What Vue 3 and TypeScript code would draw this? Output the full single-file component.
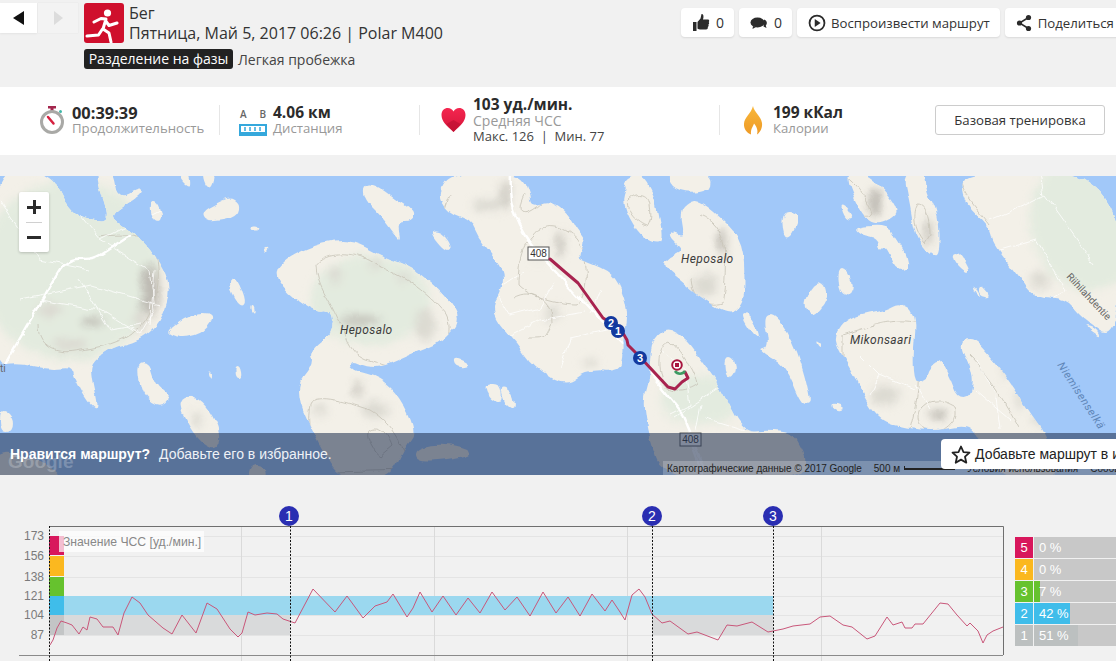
<template>
  <div class="page">
    <header class="top">
      <div class="nav">
        <button class="nav-btn prev"><span class="tri-left"></span></button>
        <button class="nav-btn next"><span class="tri-right"></span></button>
      </div>
      <div class="title-block">
        <div class="title-row">
          <svg class="sport-icon" viewBox="0 0 40 40">
            <rect width="40" height="40" rx="3" fill="#cf0f2c" />
            <circle cx="23.5" cy="10" r="3.6" fill="#fff" />
            <path d="M10 19l7-3.500 5 .5-3 10 6 4 2 9M21 17l4 5.500 8-2.500M18.500 26l-4 6-11.500 1" fill="none" stroke="#fff" stroke-width="3" stroke-linecap="round" stroke-linejoin="round" />
          </svg>
          <div class="title-text">
            <div>Бег</div>
            <div>Пятница, Май 5, 2017 06:26 | Polar M400</div>
          </div>
        </div>
        <div class="tag-row">
          <span class="tag">Разделение на фазы</span>
          <span class="tag-note">Легкая пробежка</span>
        </div>
      </div>
      <div class="actions">
        <button class="act count">
          <svg width="18" height="18" viewBox="0 0 18 18"><path d="M1 8h3.500v9H1zM5.500 8l3-3.500L9.500 0c2 0 2.500 2 1.500 5.500h5c1.500 0 1.500 2 .7 2.500.8 1 .5 2-.3 2.500.5 1 .2 2-.6 2.500.3 1.500-.3 2.500-1.800 2.500H8c-1.500 0-2.500-.8-2.500-1z" fill="#2b2b2b" /></svg>
          <span>0</span>
        </button>
        <button class="act count">
          <svg width="18" height="14" viewBox="0 0 18 14"><ellipse cx="7.500" cy="6.500" rx="7" ry="5" fill="#2b2b2b" /><path d="M14 3.500c3 1 3.800 4 1.800 6l.7 2.500-3-1.500z" fill="#2b2b2b" /><path d="M3 10l-.5 3 3.500-2z" fill="#2b2b2b" /></svg>
          <span>0</span>
        </button>
        <button class="act play">
          <svg width="18" height="18" viewBox="0 0 20 20"><circle cx="10" cy="10" r="8.300" fill="none" stroke="#2b2b2b" stroke-width="2" /><path d="M7.500 5.500l6.500 4.500-6.500 4.500z" fill="#2b2b2b" /></svg>
          <span>Воспроизвести маршрут</span>
        </button>
        <button class="act">
          <svg width="16" height="18" viewBox="0 0 16 18"><path d="M12.500 3.500L3.500 9l9 5.500" fill="none" stroke="#2b2b2b" stroke-width="1.500" /><circle cx="12.500" cy="3.500" r="2.600" fill="#2b2b2b" /><circle cx="3.500" cy="9" r="2.600" fill="#2b2b2b" /><circle cx="12.500" cy="14.500" r="2.600" fill="#2b2b2b" /></svg>
          <span>Поделиться</span>
        </button>
      </div>
    </header>

    <section class="stats">
      <div class="stat stat-time">
        <svg class="stat-icon" width="26" height="30" viewBox="0 0 26 30">
          <rect x="9" y="1" width="8" height="2.500" fill="#a3264d" />
          <rect x="11.500" y="3" width="3" height="3" fill="#a3264d" />
          <circle cx="21.500" cy="6.500" r="1.500" fill="#3fb8a8" />
          <circle cx="13" cy="17" r="10.500" fill="#fff" stroke="#a9a9a6" stroke-width="3" />
          <path d="M9 12l5.500 6.500" stroke="#d6213f" stroke-width="2.500" stroke-linecap="round" />
        </svg>
        <div>
          <div class="stat-value time">00:39:39</div>
          <div class="stat-label">Продолжительность</div>
        </div>
      </div>
      <div class="stat stat-dist">
        <div class="ruler">
          <div class="ruler-ab"><span>A</span><span>B</span></div>
          <svg width="28" height="12" viewBox="0 0 28 12">
            <rect x="1" y="1" width="26" height="10" fill="#fff" stroke="#35a8dc" stroke-width="2" />
            <path d="M6 3v4M11 3v4M16 3v4M21 3v4" stroke="#35a8dc" stroke-width="1.500" />
            <rect x="1" y="8" width="26" height="3" fill="#35a8dc" />
          </svg>
        </div>
        <div>
          <div class="stat-value">4.06 км</div>
          <div class="stat-label">Дистанция</div>
        </div>
      </div>
      <div class="stat stat-hr">
        <svg class="stat-icon" width="25" height="26" viewBox="0 0 25 26">
          <defs>
            <linearGradient id="heart" x1="0" y1="0" x2="0" y2="1">
              <stop offset="0" stop-color="#f4264f" />
              <stop offset="1" stop-color="#d5153a" />
            </linearGradient>
          </defs>
          <path d="M12.500 25C6 19 .5 14.500.5 8 .5 3.500 3.500 1 6.800 1c2.500 0 4.500 1.300 5.700 3.500C13.700 2.300 15.700 1 18.200 1c3.300 0 6.300 2.500 6.300 7 0 6.500-5.500 11-12 17z" fill="url(#heart)" />
          <path d="M12.500 25L5.500 17l7-4 7 4z" fill="#b80f31" opacity="0.6" />
        </svg>
        <div>
          <div class="stat-value">103 уд./мин.</div>
          <div class="stat-label wide">Средняя ЧСС</div>
          <div class="stat-extra">Макс. 126&nbsp; | &nbsp;Мин. 77</div>
        </div>
      </div>
      <div class="stat stat-cal">
        <svg class="stat-icon" width="20" height="29" viewBox="0 0 20 29">
          <defs>
            <linearGradient id="flame" x1="0" y1="0" x2="0" y2="1">
              <stop offset="0" stop-color="#f8b73a" />
              <stop offset="1" stop-color="#ee9a26" />
            </linearGradient>
          </defs>
          <path d="M10 0c1 6 8 10 9 17 .6 5-2 9.500-5 11.500 1-3 .5-7-3-11-1 3.500-3.500 5-3 11C4 27 .5 23 1 17.500 1.500 11 8 8 10 0z" fill="url(#flame)" />
        </svg>
        <div>
          <div class="stat-value">199 кКал</div>
          <div class="stat-label">Калории</div>
        </div>
      </div>
      <button class="base-btn">Базовая тренировка</button>
    </section>

    <section class="map">
      <svg class="map-art" viewBox="0 176 1116 299">
        <defs>
          <filter id="soft" x="-50%" y="-50%" width="200%" height="200%"><feGaussianBlur stdDeviation="4" /></filter>
          <filter id="rough" filterUnits="userSpaceOnUse" x="-20" y="160" width="1160" height="330">
            <feTurbulence type="fractalNoise" baseFrequency="0.06" numOctaves="3" seed="4" result="noise" />
            <feDisplacementMap in="SourceGraphic" in2="noise" scale="7" xChannelSelector="R" yChannelSelector="G" />
            <feGaussianBlur stdDeviation="0.4" />
          </filter>
          <clipPath id="lands"><path v-for="(d, i) in landPaths" :key="i" :d="d" /></clipPath>
        </defs>
        <rect x="0" y="176" width="1116" height="299" fill="#a1c8f9" />
        <g filter="url(#rough)">
          <path v-for="(d, i) in landPaths" :key="i" :d="d" fill="#f3f0e8" />
          <g clip-path="url(#lands)">
            <g filter="url(#soft)">
              <ellipse v-for="(z, i) in greens" :key="'g' + i" :cx="z[0]" :cy="z[1]" :rx="z[2]" :ry="z[3]" fill="#e3ebdf" />
              <ellipse v-for="(h, i) in hills" :key="'h' + i" :cx="h[0]" :cy="h[1]" :rx="h[2]" :ry="h[3]" :fill="h[4] ? '#bdbab2' : '#dcdad2'" />
            </g>
            <path v-for="(d, i) in contours" :key="'c' + i" :d="d" fill="none" stroke="#c6c3b6" stroke-width="0.8" />
            <path v-for="(d, i) in minorRoads" :key="'r' + i" :d="d" fill="none" stroke="#fff" stroke-width="0.9" opacity="0.85" />
            <path v-for="(d, i) in mainRoads" :key="'m' + i" :d="d" fill="none" stroke="#fff" stroke-width="2.400" />
          </g>
        </g>

        <text class="place" x="340" y="334">Heposalo</text>
        <text class="place" x="681" y="263">Heposalo</text>
        <text class="place" x="850" y="344">Mikonsaari</text>
        <text class="road-name" transform="translate(1066 277) rotate(47)">Riihilahdentie</text>
        <text class="water-name" transform="translate(1057 365) rotate(57)">Niemisenselkä</text>
        <text class="road-name" x="0" y="372">ti</text>

        <g v-for="s in shields" :key="s[0]">
          <rect :x="s[0]" :y="s[1]" width="21" height="13" fill="#fff" stroke="#555" />
          <text class="shield" :x="s[0] + 10.500" :y="s[1] + 10">408</text>
        </g>

        <path d="M550 259L565 272 578 283 603 318 620 328 627 340 628 345 640 357 668 387 675 389 682 382 688 378 685 372" fill="none" stroke="#a8234f" stroke-width="3" stroke-linejoin="round" stroke-linecap="round" />
        <path d="M675 371a6 6 0 0 0 10 0" fill="none" stroke="#3e9a63" stroke-width="2.500" />
        <circle cx="677" cy="365" r="4.800" fill="#fff" stroke="#a8163f" stroke-width="2" />
        <rect x="675" y="363" width="4" height="4" fill="#a8163f" />
        <g v-for="m in routeMarks" :key="m.n">
          <circle :cx="m.x" :cy="m.y" r="7" fill="#13399f" />
          <text class="route-num" :x="m.x" :y="m.y + 4">{{ m.n }}</text>
        </g>
      </svg>

      <div class="zoom-ctl">
        <button class="zoom-btn"><span class="plus"></span></button>
        <button class="zoom-btn"><span class="minus"></span></button>
      </div>

      <div class="fav-bar">
        <span class="fav-strong">Нравится маршрут?</span>
        <span class="fav-soft">Добавьте его в избранное.</span>
      </div>
      <span class="g-logo">Google</span>
      <div class="attrib">
        <span>Картографические данные © 2017 Google</span>
        <span class="scale">500 м <i></i></span>
        <span>Условия использования</span>
        <span>Сообщить об ошибке</span>
      </div>
      <button class="fav-btn">
        <svg width="20" height="19" viewBox="0 0 20 19"><path d="M10 1.500l2.500 5.600 6 .6-4.500 4 1.300 6L10 14.600l-5.300 3.100 1.300-6-4.500-4 6-.6z" fill="none" stroke="#222" stroke-width="1.800" stroke-linejoin="round" /></svg>
        <span>Добавьте маршрут в избранное</span>
      </button>
    </section>

    <section class="chart-wrap">
      <svg class="chart" width="1010" height="186" viewBox="0 475 1010 186">
        <line v-for="y in gridY" :key="'y' + y" x1="49" x2="1003" :y1="y + 0.5" :y2="y + 0.5" stroke="#e4e4e4" />
        <line v-for="x in gridX" :key="'x' + x" :x1="x + 0.5" :x2="x + 0.5" y1="526" y2="661" stroke="#dadada" />

        <rect x="49" y="596" width="724" height="19" fill="#9bd8ef" />
        <rect x="49" y="615" width="241" height="20" fill="#d9dadb" />
        <rect x="652" y="615" width="121" height="20" fill="#d9dadb" />

        <rect v-for="z in zoneBlocks" :key="z.y" x="49" :y="z.y" width="15" :height="z.h" :fill="z.c" />

        <rect x="59" y="531" width="145" height="21" fill="#fff" opacity="0.72" />
        <text class="chart-title" x="63" y="546">Значение ЧСС [уд./мин.]</text>

        <text v-for="t in yTicks" :key="t.v" class="tick" x="44" :y="t.y">{{ t.v }}</text>

        <polyline :points="hrLine" fill="none" stroke="#c9577a" stroke-width="1" />

        <path d="M49 526.500H1003.500V655" fill="none" stroke="#6f6f6f" />
        <line x1="19" x2="1003" y1="655.500" y2="655.500" stroke="#8a8a8a" />
        <line v-for="x in [49, 290, 652, 773]" :key="'d' + x" :x1="x + 0.5" :x2="x + 0.5" y1="526" y2="661" stroke="#111" stroke-dasharray="2 1.500" />

        <g v-for="m in lapMarks" :key="m.n">
          <circle :cx="m.x" cy="516" r="10" fill="#2a2eb2" />
          <text class="lap-num" :x="m.x" y="521">{{ m.n }}</text>
        </g>
      </svg>

      <div class="zones">
        <div v-for="z in zones" :key="z.n" class="zone">
          <div class="zone-n" :style="{ background: z.color }">{{ z.n }}</div>
          <div class="zone-bar">
            <div class="zone-fill" :style="{ width: z.pct * 0.86 + 'px', background: z.fill }"></div>
            <span>{{ z.pct }} %</span>
          </div>
        </div>
      </div>
    </section>
  </div>
</template>

<script setup lang="ts">
type Pt = [number, number]

// closed outline through the midpoints, so coasts don't look like polygons
function blob(pts: Pt[]): string {
  const mid = (a: Pt, b: Pt): Pt => [(a[0] + b[0]) / 2, (a[1] + b[1]) / 2]
  const start = mid(pts[pts.length - 1], pts[0])
  let d = `M${start[0]} ${start[1]}`
  pts.forEach((p, i) => {
    const m = mid(p, pts[(i + 1) % pts.length])
    d += `Q${p[0]} ${p[1]} ${m[0]} ${m[1]}`
  })
  return d + 'Z'
}

const lands: Pt[][] = [
  [[-10, 170], [50, 170], [70, 213], [100, 222], [110, 217], [93, 170], [113, 170], [117, 200], [140, 187], [142, 195], [113, 212], [113, 220], [140, 237], [160, 263], [171, 287], [163, 317], [150, 333], [133, 343], [113, 347], [93, 360], [90, 373], [99, 412], [87, 403], [73, 377], [72, 367], [50, 370], [20, 363], [-10, 367]],
  [[150, 202], [157, 200], [163, 215], [160, 223], [152, 220]],
  [[201, 212], [215, 204], [230, 197], [240, 203], [238, 215], [225, 220], [205, 222]],
  [[177, 172], [188, 172], [190, 187], [183, 183]],
  [[203, 172], [216, 172], [212, 189], [206, 185]],
  [[250, 227], [256, 226], [258, 231], [251, 232]],
  [[263, 249], [268, 247], [266, 252]],
  [[363, 186], [375, 185], [395, 200], [414, 212], [410, 222], [397, 222], [401, 241], [395, 235], [388, 225], [380, 215], [365, 200]],
  [[430, 231], [440, 230], [451, 243], [450, 251], [443, 248]],
  [[230, 277], [237, 277], [247, 303], [240, 307], [230, 290]],
  [[250, 305], [253, 305], [254, 313], [251, 312]],
  [[167, 330], [190, 314], [216, 314], [205, 332], [185, 338], [170, 335]],
  [[137, 363], [150, 363], [155, 385], [172, 398], [160, 407], [145, 397], [140, 385]],
  [[177, 402], [193, 394], [210, 410], [221, 435], [216, 450], [203, 445], [190, 430]],
  [[208, 373], [212, 372], [212, 382]],
  [[235, 366], [240, 366], [242, 378], [236, 378]],
  [[0, 407], [13, 415], [13, 432], [0, 432]],
  [[-5, 448], [45, 462], [66, 480], [-5, 480]],
  [[250, 465], [262, 463], [268, 480], [248, 480]],
  [[273, 270], [300, 250], [347, 237], [383, 257], [413, 267], [447, 297], [461, 320], [440, 343], [413, 353], [383, 367], [367, 367], [350, 360], [350, 370], [380, 377], [400, 397], [417, 433], [405, 447], [390, 480], [340, 480], [320, 445], [293, 390], [315, 363], [310, 350], [333, 333], [333, 310], [317, 313], [287, 293]],
  [[415, 448], [445, 443], [478, 453], [445, 460], [415, 461]],
  [[453, 357], [473, 367], [455, 369]],
  [[483, 385], [500, 383], [503, 403], [490, 401]],
  [[438, 193], [452, 172], [520, 172], [530, 193], [532, 207], [550, 200], [567, 213], [577, 230], [587, 242], [577, 258], [587, 262], [613, 273], [625, 297], [628, 320], [623, 335], [624, 355], [620, 373], [587, 370], [567, 387], [533, 367], [517, 343], [497, 322], [491, 305], [503, 290], [503, 270], [490, 253], [477, 237], [470, 220], [447, 212]],
  [[500, 385], [512, 392], [515, 410], [505, 405]],
  [[650, 343], [667, 327], [687, 340], [703, 363], [720, 387], [743, 433], [767, 430], [793, 433], [800, 445], [807, 460], [800, 480], [665, 480], [650, 440], [643, 400], [650, 380]],
  [[623, 180], [640, 172], [653, 193], [658, 213], [662, 242], [652, 243], [637, 232], [622, 203], [628, 187]],
  [[668, 172], [710, 172], [711, 190], [690, 194], [672, 188]],
  [[690, 202], [700, 200], [727, 223], [743, 243], [745, 283], [743, 303], [730, 315], [700, 297], [680, 280], [662, 265], [672, 255], [684, 250], [670, 238], [672, 232], [685, 238], [680, 212]],
  [[740, 313], [750, 313], [762, 337], [755, 337]],
  [[763, 315], [777, 315], [798, 350], [811, 400], [808, 406], [800, 403], [785, 365], [757, 350], [770, 348]],
  [[782, 212], [798, 212], [798, 225], [790, 239], [783, 235]],
  [[803, 305], [815, 282], [825, 285], [827, 300], [812, 318]],
  [[837, 267], [845, 267], [854, 287], [845, 298], [838, 290]],
  [[840, 204], [846, 205], [854, 218], [846, 219]],
  [[843, 172], [868, 172], [901, 210], [892, 220], [875, 225], [862, 215]],
  [[855, 227], [890, 225], [895, 238], [906, 253], [908, 270], [895, 270], [885, 245], [880, 252], [878, 238], [860, 235]],
  [[903, 172], [925, 172], [925, 190], [938, 215], [939, 256], [930, 255], [915, 235], [910, 205]],
  [[953, 253], [960, 253], [971, 272], [965, 272], [955, 262]],
  [[972, 288], [976, 290], [981, 299], [976, 296]],
  [[980, 285], [985, 290], [992, 299], [978, 297]],
  [[960, 170], [963, 203], [990, 227], [993, 243], [1020, 277], [1033, 297], [1067, 298], [1080, 317], [1120, 345], [1120, 170]],
  [[1083, 325], [1095, 328], [1100, 338]],
  [[835, 333], [850, 317], [887, 310], [900, 302], [917, 313], [913, 357], [915, 383], [927, 380], [927, 370], [940, 358], [950, 377], [957, 397], [970, 397], [973, 373], [958, 343], [973, 338], [987, 353], [1007, 377], [1033, 417], [1045, 433], [1062, 480], [1000, 480], [977, 433], [965, 425], [930, 432], [883, 423], [867, 403], [853, 373], [837, 347]],
  [[815, 340], [822, 345], [819, 348]],
  [[832, 403], [842, 405], [841, 411], [833, 409]],
  [[725, 357], [733, 357], [737, 370], [731, 380], [726, 375]]
]
const landPaths = lands.map(blob)

// cx, cy, rx, ry, dark?
const hills: [number, number, number, number, number][] = [
  [150, 290, 9, 26, 1], [93, 322, 12, 4, 1], [140, 322, 7, 12, 0], [50, 310, 12, 8, 0], [70, 345, 18, 6, 0],
  [335, 275, 6, 9, 0], [375, 265, 6, 6, 0], [403, 278, 5, 6, 0], [360, 320, 22, 4, 1], [425, 325, 10, 16, 0],
  [358, 390, 3, 8, 1], [320, 410, 8, 5, 0], [375, 410, 14, 8, 0], [197, 420, 5, 8, 0],
  [490, 205, 18, 6, 0], [505, 195, 3, 14, 1], [560, 245, 3, 14, 1], [537, 255, 2, 8, 0],
  [552, 313, 8, 7, 0], [590, 362, 8, 4, 0], [722, 242, 4, 12, 1], [705, 285, 12, 12, 0],
  [875, 203, 6, 14, 1], [928, 232, 3, 14, 1], [1040, 280, 10, 8, 0], [1040, 420, 8, 5, 0],
  [938, 415, 8, 5, 1], [885, 395, 14, 10, 0], [1020, 400, 4, 10, 0], [1005, 370, 3, 10, 0]
]
const greens: [number, number, number, number][] = [
  [70, 270, 90, 90], [1090, 220, 60, 70], [370, 300, 60, 45], [700, 400, 40, 25]
]

const contours: string[] = [
  'M100 237c30-5 50 0 55 15 8 25 0 55-10 70-12 15-35 25-65 28-20 5-42 0-42-25',
  'M316 265c10-15 40-15 60 0 25 10 50 25 70 50 8 15 0 40-20 55-15 5-40-5-60-10-20-8-20-30-28-40-8-20-22-35-22-55z',
  'M310 405c5-12 30-5 60 5 25 15 35 40 40 60l-80 2c-15-20-25-45-20-67z',
  'M368 432c8-10 20 0 25 15l-12 10c-8-5-15-20-13-25z',
  'M525 195c-10 20 0 25 20 5l-2-22M450 195c-10 25-5 20 10 25',
  'M533 235c10-15 40-10 50 15 5 20 5 40-5 55-15 0-45-5-60-20 0-25 5-40 15-50z',
  'M513 298c20-12 40 5 40 25-8 15-5 15-25 15',
  'M670 340c15 15 25 30 27 45-10 8-30 10-35-5-5-15-5-35 8-40z',
  'M628 200c8-8 20-8 22 5 2 12 0 18-3 22-12-5-22-18-19-27z',
  'M700 215c12 5 20 15 24 30 3 25 0 50-2 58-15 5-30-5-30-25',
  'M846 177c8 5 20 20 25 35-2 8-15 5-20-10z M918 205c8 0 12 15 12 30l-5 8c-12-15-12-30-7-38z',
  'M843 335c30-10 60-20 80-10 5 20-5 40-5 60 0 15-8 45-10 50-30 0-45-40-65-65z',
  'M920 410c15-15 25-8 35-3 5 10-8 25-25 27-10-5-15-15-10-24z',
  'M968 355c15 15 30 35 50 70M960 178c0 15 25 40 30 48'
]
const minorRoads: string[] = [
  'M0 200l40 60 50 10M60 190l40 50 50 30 5 40-15 25-40-25-60-10M100 240l60-30M155 270l-5 55M20 300l70-15 70 20M80 280l30 50 30-5',
  'M525 270l-30 20 15 25 30-8 15-25M500 340l40-20 45-8M560 368l10-30 45-10M600 290l-10 25',
  'M660 350l25 20 5 35-20 10M720 387l-45 30M700 405l-5 25M745 430l-40-12',
  'M860 355l20 20 35 15M880 375l-10 20M915 385l15 25M975 360l20 30 5 40M1010 420l-35-30',
  'M990 220l35-15 20-10 50 70M1000 250l35-10 30 50-35 20M1043 195l-5-25'
]
const mainRoads: string[] = [
  'M0 372C20 340 35 310 60 270 75 250 85 265 100 255L130 235',
  'M510 175c-2 30 5 50 30 80M540 255l65 70 35 35 40 50 25 60',
  'M690 440l15 40'
]

const shields: [number, number][] = [[528, 247], [680, 433]]
const routeMarks = [
  { n: 2, x: 611, y: 323 },
  { n: 1, x: 618, y: 331 },
  { n: 3, x: 640, y: 358 }
]

const gridY = [536, 556, 577, 596, 615, 635]
const gridX = [241, 434, 627, 821]
const yTicks = [
  { v: 173, y: 540 }, { v: 156, y: 560 }, { v: 138, y: 581 },
  { v: 121, y: 600 }, { v: 104, y: 619 }, { v: 87, y: 639 }
]
const zoneBlocks = [
  { y: 536, h: 19, c: '#d8175c' },
  { y: 556, h: 20, c: '#fbb81f' },
  { y: 577, h: 19, c: '#66c22e' },
  { y: 596, h: 19, c: '#3fbdea' },
  { y: 615, h: 20, c: '#c3c5c6' }
]
const lapMarks = [
  { n: 1, x: 289 },
  { n: 2, x: 652 },
  { n: 3, x: 773 }
]

// heart rate curve, read off the chart
const hrPts: Pt[] = [
  [50, 645], [53, 640], [57, 628], [61, 621], [67, 623], [72, 625], [79, 634], [83, 627], [87, 630], [90, 617], [97, 619], [103, 627], [113, 627], [118, 635], [124, 613], [132, 597], [140, 603], [148, 615], [163, 628], [172, 634], [182, 615], [196, 633], [207, 603], [217, 609], [230, 629], [238, 637], [242, 633], [248, 612], [255, 615], [267, 613], [277, 614], [283, 619], [295, 623],
  [313, 589], [335, 612], [347, 596], [363, 618], [375, 606], [387, 602], [393, 594], [407, 617], [413, 608], [420, 592], [432, 612], [443, 596], [456, 615], [468, 598], [480, 613], [492, 592], [505, 610], [517, 597], [530, 616], [543, 592], [556, 613], [568, 597], [580, 616], [592, 594], [605, 611], [612, 600], [620, 612], [625, 620], [632, 595], [639, 589], [645, 597],
  [652, 614], [662, 623], [670, 621], [688, 634], [697, 632], [718, 640], [727, 625], [737, 626], [752, 622], [768, 632], [783, 629], [793, 626], [810, 624], [820, 617], [830, 616], [843, 625], [852, 627], [867, 639], [875, 636], [887, 617], [893, 625], [902, 622], [905, 628], [912, 628], [915, 624], [923, 624], [940, 603], [948, 604], [957, 615], [967, 626], [970, 623], [978, 631], [983, 643], [987, 635], [993, 631], [1003, 627]
]
const hrLine = hrPts.map((p) => p.join(',')).join(' ')

const zones = [
  { n: 5, pct: 0, color: '#d8175c', fill: 'transparent' },
  { n: 4, pct: 0, color: '#fbb81f', fill: 'transparent' },
  { n: 3, pct: 7, color: '#66c22e', fill: '#66c22e' },
  { n: 2, pct: 42, color: '#3fbdea', fill: '#3fbdea' },
  { n: 1, pct: 51, color: '#bcc0c0', fill: '#bcc0c0' }
]
</script>

<style>
html,
body {
  margin: 0;
  overflow: hidden;
  background: #f1f1f1;
}
</style>

<style scoped>
.page {
  width: 1116px;
  height: 661px;
  overflow: hidden;
  background: #f1f1f1;
  font-family: "Open Sans", "Liberation Sans", sans-serif;
  color: #333;
}

button {
  font-family: inherit;
  border: none;
  padding: 0;
  background: #fff;
  color: inherit;
}

.top {
  height: 87px;
  display: flex;
  align-items: flex-start;
  position: relative;
}

.nav {
  width: 84px;
  flex: none;
  display: flex;
  padding-top: 3px;
}

.nav-btn {
  height: 30px;
  display: flex;
  align-items: center;
  justify-content: center;
}

.prev {
  width: 37px;
  box-shadow: 0 1px 2px rgba(0, 0, 0, 0.06);
}

.next {
  width: 40px;
  margin-left: 1px;
  background: #f3f3f3;
  box-shadow: 0 0 1px #ddd;
}

.tri-left {
  border-right: 11px solid #111;
  border-top: 7.5px solid transparent;
  border-bottom: 7.5px solid transparent;
}

.tri-right {
  border-left: 9px solid #dcdcdc;
  border-top: 7.5px solid transparent;
  border-bottom: 7.5px solid transparent;
}

.title-block {
  padding-top: 3px;
  width: 597px;
  flex: none;
}

.title-row {
  display: flex;
  gap: 5px;
}

.sport-icon {
  width: 40px;
  height: 40px;
  flex: none;
}

.title-text {
  font-size: 16px;
  line-height: 20px;
  color: #333;
}

.tag-row {
  margin-top: 6px;
  display: flex;
  align-items: center;
  gap: 5px;
  font-size: 14px;
}

.tag {
  height: 20px;
  line-height: 20px;
  width: 149px;
  text-align: center;
  background: #222;
  color: #fff;
  border-radius: 3px;
  white-space: nowrap;
}

.tag-note {
  color: #444;
}

.actions {
  padding-top: 8px;
  display: flex;
  gap: 5px;
  white-space: nowrap;
}

.act {
  height: 29px;
  padding: 0 11px;
  background: #fff;
  border-radius: 4px;
  box-shadow: 0 1px 2px rgba(0, 0, 0, 0.1);
  display: flex;
  align-items: center;
  gap: 6px;
  font-size: 13.2px;
  flex: none;
}

.count {
  font-size: 14px;
  padding-right: 10px;
}

.play {
  gap: 5px;
  padding-right: 10px;
}

.stats {
  height: 68px;
  box-sizing: border-box;
  padding-bottom: 2px;
  background: #fff;
  display: flex;
  align-items: center;
  position: relative;
}

.stat {
  height: 30px;
  display: flex;
  align-items: center;
  box-sizing: border-box;
  flex: none;
  border-right: 1px solid #e6e6e6;
}

.stat-time {
  width: 220px;
  padding-left: 39px;
  gap: 7px;
}

.stat-dist {
  width: 200px;
  padding-left: 19px;
  gap: 6px;
}

.stat-hr {
  width: 300px;
  padding-left: 21px;
  gap: 7px;
}

.stat-cal {
  width: 215px;
  padding-left: 23px;
  gap: 10px;
  border-right: none;
}

.stat-icon {
  flex: none;
}

.stat-value {
  font-size: 15.5px;
  line-height: 17px;
  font-weight: 700;
  color: #2b2b2b;
  white-space: nowrap;
}

.stat-value.time {
  font-size: 16.4px;
}

.stat-label {
  font-size: 13.2px;
  line-height: 15px;
  color: #999;
  white-space: nowrap;
}

.stat-label.wide {
  font-size: 14px;
}

.stat-extra {
  font-size: 13px;
  line-height: 16px;
  color: #444;
  white-space: nowrap;
}

.ruler {
  width: 28px;
  flex: none;
}

.ruler-ab {
  display: flex;
  justify-content: space-between;
  padding: 0 1px;
  font-size: 10px;
  line-height: 19px;
  font-weight: 600;
  color: #666;
}

.ruler svg {
  display: block;
}

.base-btn {
  width: 170px;
  height: 30px;
  background: #fff;
  border: 1px solid #ccc;
  border-radius: 3px;
  font-size: 13.2px;
  color: #333;
  white-space: nowrap;
}

.map {
  margin-top: 21px;
  height: 299px;
  position: relative;
  overflow: hidden;
}

.map-art {
  display: block;
  width: 1116px;
  height: 299px;
}

.place {
  font: italic 12px Roboto, "Liberation Sans", sans-serif;
  fill: #3c3c3c;
  letter-spacing: 0.4px;
}

.road-name {
  font: 10px Roboto, "Liberation Sans", sans-serif;
  fill: #666;
}

.water-name {
  font: italic 11px Roboto, "Liberation Sans", sans-serif;
  fill: #5f86b8;
  letter-spacing: 0.6px;
}

.shield {
  font: 10px "Liberation Sans", sans-serif;
  fill: #333;
  text-anchor: middle;
}

.route-num {
  font: 700 11px "Liberation Sans", sans-serif;
  fill: #fff;
  text-anchor: middle;
}

.zoom-ctl {
  position: absolute;
  left: 19px;
  top: 16px;
  width: 30px;
  height: 60px;
  background: #fff;
  border-radius: 2px;
  box-shadow: 0 1px 3px rgba(0, 0, 0, 0.2);
}

.zoom-btn {
  display: flex;
  align-items: center;
  justify-content: center;
  width: 30px;
  height: 30px;
  background: transparent;
}

.plus {
  width: 14px;
  height: 14px;
  background:
    linear-gradient(#2b2b2b, #2b2b2b) center / 14px 3px no-repeat,
    linear-gradient(#2b2b2b, #2b2b2b) center / 3px 14px no-repeat;
}

.minus {
  width: 14px;
  height: 3px;
  background: #2b2b2b;
}

.zoom-btn + .zoom-btn {
  position: relative;
}

.zoom-btn + .zoom-btn::before {
  content: "";
  position: absolute;
  left: 7px;
  right: 7px;
  top: 0;
  height: 1px;
  background: #d0d0d0;
}

.fav-bar {
  position: absolute;
  left: 0;
  right: 0;
  bottom: 0;
  height: 42px;
  background: rgba(36, 52, 82, 0.58);
  display: flex;
  align-items: center;
  padding-left: 10px;
  gap: 9px;
  font: 14px "Liberation Sans", sans-serif;
  color: #fff;
}

.fav-strong {
  font-weight: 700;
}

.fav-soft {
  color: #eef1f6;
}

.g-logo {
  position: absolute;
  left: 8px;
  bottom: 2px;
  font: 700 19px "Liberation Sans", sans-serif;
  color: rgba(255, 255, 255, 0.22);
}

.attrib {
  position: absolute;
  left: 663px;
  bottom: 0;
  height: 14px;
  width: 460px;
  padding-left: 4px;
  display: flex;
  align-items: center;
  gap: 12px;
  background: rgba(255, 255, 255, 0.22);
  font: 10px "Liberation Sans", sans-serif;
  color: #222;
  white-space: nowrap;
}

.scale {
  display: flex;
  align-items: center;
  gap: 4px;
}

.scale i {
  width: 51px;
  height: 4px;
  border: 1px solid #222;
  border-top: none;
  border-bottom-width: 2px;
  box-sizing: border-box;
}

.fav-btn {
  position: absolute;
  left: 941px;
  bottom: 6px;
  width: 200px;
  height: 30px;
  background: #fff;
  border-radius: 4px;
  display: flex;
  align-items: center;
  gap: 4px;
  padding-left: 10px;
  font: 14px "Liberation Sans", sans-serif;
  color: #222;
  white-space: nowrap;
  overflow: hidden;
}

.fav-btn svg {
  flex: none;
}

.chart-wrap {
  display: flex;
  height: 186px;
}

.chart {
  display: block;
  flex: none;
}

.tick {
  font: 12px "Liberation Sans", sans-serif;
  fill: #7a7a7a;
  text-anchor: end;
}

.chart-title {
  font: 12.2px "Liberation Sans", sans-serif;
  fill: #888;
}

.lap-num {
  font: 14px "Liberation Sans", sans-serif;
  fill: #fff;
  text-anchor: middle;
}

.zones {
  margin-top: 62px;
  margin-left: 5px;
  flex: none;
  display: flex;
  flex-direction: column;
  gap: 1px;
}

.zone {
  display: flex;
  height: 21px;
  gap: 1px;
  font: 13px "Liberation Sans", sans-serif;
  color: #fff;
}

.zone-n {
  width: 18px;
  text-align: center;
  line-height: 21px;
}

.zone-bar {
  width: 86px;
  background: #c8c8c8;
  position: relative;
  line-height: 21px;
}

.zone-fill {
  position: absolute;
  left: 0;
  top: 0;
  bottom: 0;
}

.zone-bar span {
  position: relative;
  padding-left: 5px;
}
</style>
